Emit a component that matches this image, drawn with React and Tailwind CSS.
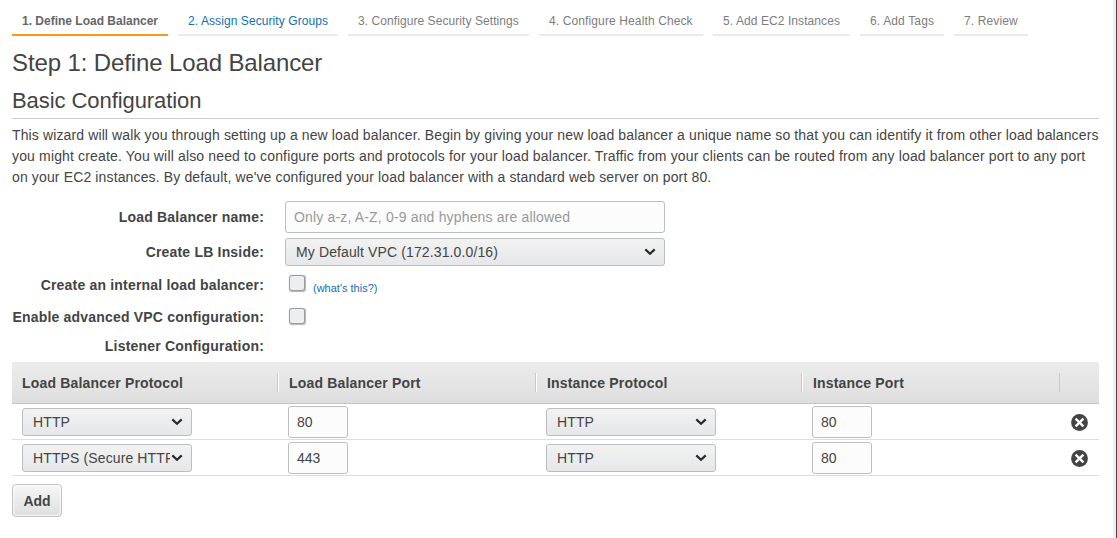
const STEPS = [
  ["1. Define Load Balancer", "w-[156px] border-[#f7981f] font-bold text-[#666]"],
  ["2. Assign Security Groups", "w-[160px] border-[#eaeaea] text-[#146eb4] tracking-[0.08px]"],
  ["3. Configure Security Settings", "w-[181px] border-[#eaeaea] text-[#7d7d7d] tracking-[0.07px]"],
  ["4. Configure Health Check", "w-[164px] border-[#eaeaea] text-[#7d7d7d] tracking-[0.12px]"],
  ["5. Add EC2 Instances", "w-[137px] border-[#eaeaea] text-[#7d7d7d] tracking-[0.08px]"],
  ["6. Add Tags", "w-[84px] border-[#eaeaea] text-[#7d7d7d] tracking-[0.15px]"],
  ["7. Review", "w-[74px] border-[#eaeaea] text-[#7d7d7d] tracking-[0.12px]"],
];

const LISTENERS = [
  ["HTTP", "80", "HTTP", "80"],
  ["HTTPS (Secure HTTP)", "443", "HTTP", "80"],
];

function Select({ children, className }) {
  return (
    <div
      className={`flex h-7 items-center rounded-[3px] border border-[#bbbfbf] bg-linear-to-b from-[#f2f2f2] to-[#e6e7e9] pr-[9px] pl-2.5 tracking-[0.12px] ${className}`}
    >
      <span className="min-w-0 flex-1 overflow-hidden whitespace-nowrap">{children}</span>
      <svg className="shrink-0 overflow-visible" width="12" height="8" viewBox="0 0 12 8" fill="none">
        <path d="M2.3 1.4 L7 5.8 L11.7 1.4" stroke="#2a2a2a" strokeWidth="2.2" />
      </svg>
    </div>
  );
}

function TextBox({ children, className }) {
  return (
    <div
      className={`flex h-8 items-center rounded-[3px] border border-[#bbbfbf] bg-[#fcfcfc] px-2 ${className}`}
    >
      {children}
    </div>
  );
}

function Checkbox() {
  return (
    <span className="mb-px block size-4 rounded-[3px] border border-[#999ca0] bg-[#edeef0] shadow-[0.5px_0.5px_1px_rgba(0,0,0,0.3)]" />
  );
}

function Label({ children }) {
  return <div className="text-right font-bold tracking-[0.19px] whitespace-nowrap">{children}</div>;
}

function HeaderCell({ children, last }) {
  return (
    <div className="flex h-[41px] items-center justify-between pl-2.5 font-bold tracking-[0.18px]">
      <span className="pt-0.5">{children}</span>
      <span
        className={
          last
            ? "h-[19px] w-px bg-[#c8c8c8]"
            : "h-[19px] w-[2px] border-r border-l border-r-white border-l-[#c8c8c8]"
        }
      />
    </div>
  );
}

function RemoveIcon() {
  return (
    <svg width="17" height="17" viewBox="0 0 17 17">
      <circle cx="8.5" cy="8.5" r="8.4" fill="#444" />
      <path d="M4.6 4.6 L12.4 12.4 M12.4 4.6 L4.6 12.4" stroke="#fff" strokeWidth="2.3" />
    </svg>
  );
}

export default function App() {
  return (
    <div className="flex h-[538px] w-[1117px] overflow-hidden bg-white font-['Liberation_Sans',Arial,sans-serif] text-[14px] leading-[21px] text-[#444]">
      <main className="w-[1113px] shrink-0 pl-3">
        <nav className="flex gap-2.5 pt-[11px] text-[12px]">
          {STEPS.map(([name, style]) => (
            <div key={name} className={`h-[25px] border-b-2 pl-2.5 whitespace-nowrap ${style}`}>
              {name}
            </div>
          ))}
        </nav>
        <div className="w-[1087px]">
          <h1 className="mt-[11px] text-[24px] leading-8 tracking-[-0.12px]">Step 1: Define Load Balancer</h1>
          <h2 className="mt-[7px] h-[33px] border-b border-[#ccc] text-[22px] leading-[30px] tracking-[-0.07px]">
            Basic Configuration
          </h2>
          <p className="mt-[6px] whitespace-nowrap">
            <span className="tracking-[0.123px]">
              This wizard will walk you through setting up a new load balancer. Begin by giving your new load balancer a unique name so that you can identify it from other load balancers
            </span>
            <br />
            <span className="tracking-[0.151px]">
              you might create. You will also need to configure ports and protocols for your load balancer. Traffic from your clients can be routed from any load balancer port to any port
            </span>
            <br />
            <span className="tracking-[0.137px]">
              on your EC2 instances. By default, we've configured your load balancer with a standard web server on port 80.
            </span>
          </p>

          <div className="mt-[13px] grid grid-cols-[252px_380px] grid-rows-[32px_38px_28px_36px_22px] items-center gap-x-[21px]">
            <Label>Load Balancer name:</Label>
            <TextBox className="tracking-[0.165px] text-[#999]">Only a-z, A-Z, 0-9 and hyphens are allowed</TextBox>
            <Label>Create LB Inside:</Label>
            <Select className="">My Default VPC (172.31.0.0/16)</Select>
            <Label>Create an internal load balancer:</Label>
            <div className="flex items-center pb-[3px] pl-1">
              <Checkbox />
              <span className="mt-[9px] ml-2 text-[11px] leading-4 text-[#146eb4]">
                (what's this?)
              </span>
            </div>
            <Label>Enable advanced VPC configuration:</Label>
            <div className="pb-[2px] pl-1">
              <Checkbox />
            </div>
            <Label>Listener Configuration:</Label>
          </div>

          <section className="mt-[5px]">
            <div className="grid h-[42px] grid-cols-[267px_258px_266px_257px_39px] border-b border-[#c4c4c4] bg-linear-to-b from-[#ececec] to-[#dedede]">
              <HeaderCell>Load Balancer Protocol</HeaderCell>
              <HeaderCell>Load Balancer Port</HeaderCell>
              <HeaderCell>Instance Protocol</HeaderCell>
              <HeaderCell last>Instance Port</HeaderCell>
            </div>
            {LISTENERS.map(([protocol, port, instanceProtocol, instancePort]) => (
              <div
                key={port}
                className="grid h-9 grid-cols-[266px_258px_266px_258px_39px] items-start border-b border-[#ddd]"
              >
                <Select className="mt-1 ml-2.5 w-[170px]">{protocol}</Select>
                <TextBox className="mt-0.5 ml-2.5 w-[60px]">{port}</TextBox>
                <Select className="mt-1 ml-2.5 w-[170px]">{instanceProtocol}</Select>
                <TextBox className="mt-0.5 ml-2.5 w-[60px]">{instancePort}</TextBox>
                <div className="mt-2.5 pl-[11px]">
                  <RemoveIcon />
                </div>
              </div>
            ))}
          </section>

          <button className="mt-2 block h-[33px] w-[50px] rounded-[4px] border border-[#c4c4c4] bg-linear-to-b from-[#f6f6f6] to-[#dfdfdf] pt-0.5 font-bold shadow-[inset_0_0_2px_1px_rgba(255,255,255,0.7)]">
            Add
          </button>
        </div>
      </main>
      <div className="w-[3px] shrink-0 bg-[#eee]" />
      <div className="w-px shrink-0 bg-[#3c4650]" />
    </div>
  );
}
